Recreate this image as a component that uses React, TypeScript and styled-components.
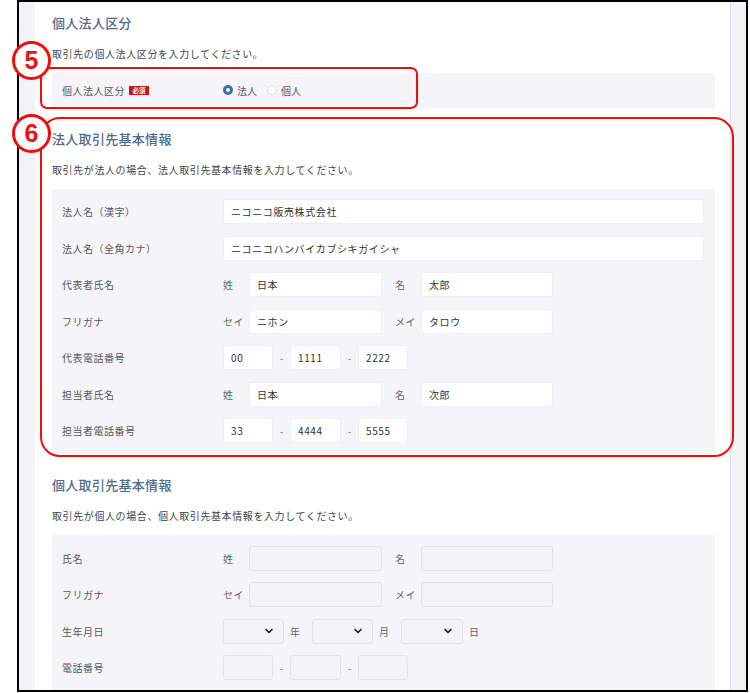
import React from 'react';
import styled, { createGlobalStyle } from 'styled-components';
import { ChevronDown } from 'lucide-react';

const GlobalStyle = createGlobalStyle`
    html, body {
        margin: 0;
        padding: 0;
        background: #ffffff;
    }
    * {
        box-sizing: border-box;
    }
`;

const FONT = `"Noto Sans CJK JP", "Noto Sans", sans-serif`;

const Stage = styled.div`
    position: relative;
    width: 750px;
    height: 693px;
    overflow: hidden;
    font-family: ${FONT};
`;

const Frame = styled.div`
    margin-left: 17px;
    width: 731px;
    height: 692px;
    border: 2px solid #000;
    display: flex;
    overflow: hidden;
`;

const Gutter = styled.div`
    width: 16px;
    flex-shrink: 0;
    background: #f3f3f7;
`;

const Track = styled.div`
    width: 16px;
    flex-shrink: 0;
    background: #f3f3f8;
    border-left: 1px solid #e2e2ea;
`;

const Panel = styled.div`
    flex: 1;
    background: #fff;
    padding: 10.5px 15px 0 17px;
`;

const Section = styled.section`
    & + & {
        margin-top: 21px;
    }
`;

const Title = styled.h2`
    margin: 0 0 13px;
    font-size: 13px;
    line-height: 20px;
    font-weight: 500;
    letter-spacing: 0.3px;
    color: #53698a;
`;

const Desc = styled.p`
    margin: 0 0 11px;
    font-size: 10px;
    line-height: 16px;
    letter-spacing: 0.6px;
    color: #444;
`;

const FormBox = styled.div<{ $compact?: boolean }>`
    background: #f5f5f9;
    padding: ${(p) => (p.$compact ? '0 11px 0 10px' : '5px 11px 5px 10px')};
`;

const Row = styled.div<{ $h?: number }>`
    display: flex;
    align-items: center;
    height: ${(p) => p.$h ?? 36.5}px;
`;

const Label = styled.div`
    width: 161px;
    flex-shrink: 0;
    display: flex;
    align-items: center;
    font-size: 10px;
    letter-spacing: 0.5px;
    color: #555;
`;

const Required = styled.span`
    margin-left: 4px;
    width: 20px;
    height: 9px;
    background: #c3161d;
    color: #fff;
    font-size: 6.5px;
    font-weight: 700;
    line-height: 9px;
    text-align: center;
    letter-spacing: 0;
`;

const Controls = styled.div`
    display: flex;
    align-items: center;
`;

const TextInput = styled.input<{ $w: number }>`
    width: ${(p) => p.$w}px;
    height: 25px;
    padding: 0 7px;
    border: 1px solid #efeff2;
    border-radius: 3px;
    background: #fff;
    font-family: ${FONT};
    font-size: 10px;
    letter-spacing: 0.6px;
    color: #333;
    outline: none;

    &:disabled {
        background: #f4f4f6;
        border-color: #e3e3e7;
    }
`;

const Prefix = styled.span<{ $gap?: number }>`
    width: 26px;
    margin-left: ${(p) => p.$gap ?? 0}px;
    flex-shrink: 0;
    font-size: 10px;
    letter-spacing: 0.5px;
    color: #666;
`;

const Dash = styled.span`
    width: 17px;
    text-align: center;
    font-size: 10px;
    color: #777;
`;

const SelectBox = styled.div<{ $w: number }>`
    width: ${(p) => p.$w}px;
    height: 25px;
    padding-right: 8px;
    display: flex;
    align-items: center;
    justify-content: flex-end;
    background: #f4f4f6;
    border: 1px solid #e3e3e7;
    border-radius: 3px;
    color: #222;
`;

const Unit = styled.span<{ $w?: number }>`
    width: ${(p) => p.$w ?? 28}px;
    padding-left: 6px;
    font-size: 10px;
    color: #666;
`;

const RadioItem = styled.label`
    display: flex;
    align-items: center;
    gap: 4px;
    margin-right: 10px;
    font-size: 10px;
    color: #556;
`;

const RadioDot = styled.span<{ $on?: boolean }>`
    width: 10px;
    height: 10px;
    border-radius: 50%;
    background: #fff;
    border: ${(p) => (p.$on ? '3px solid #3d6ea6' : '1px solid #dcdce2')};
`;

const AnnotBox = styled.div<{ $r: number }>`
    position: absolute;
    border: 2px solid #f20d0d;
    border-radius: ${(p) => p.$r}px;
    pointer-events: none;
`;

const Badge = styled.div`
    position: absolute;
    width: 39px;
    height: 39px;
    border-radius: 50%;
    border: 3.5px solid #f20d0d;
    background: #fff;
    display: flex;
    align-items: center;
    justify-content: center;
    font-family: "Liberation Sans", Arial, sans-serif;
    font-weight: 700;
    font-size: 25px;
    color: #f01010;
`;

type NameProps = { first: string; last: string; a: string; b: string; disabled?: boolean };

const NameFields = ({ first, last, a, b, disabled }: NameProps) => (
    <Controls>
        <Prefix>{first}</Prefix>
        <TextInput $w={133} readOnly value={a} disabled={disabled} />
        <Prefix $gap={13}>{last}</Prefix>
        <TextInput $w={132} readOnly value={b} disabled={disabled} />
    </Controls>
);

const PhoneFields = ({ parts, disabled }: { parts: string[]; disabled?: boolean }) => (
    <Controls>
        <TextInput $w={50} readOnly value={parts[0]} disabled={disabled} />
        <Dash>-</Dash>
        <TextInput $w={51} readOnly value={parts[1]} disabled={disabled} />
        <Dash>-</Dash>
        <TextInput $w={50} readOnly value={parts[2]} disabled={disabled} />
    </Controls>
);

const Chevron = () => <ChevronDown size={12} strokeWidth={3.5} />;

export default function App() {
    return (
        <Stage>
            <GlobalStyle />
            <Frame>
                <Gutter />
                <Panel>
                    <Section>
                        <Title>個人法人区分</Title>
                        <Desc>取引先の個人法人区分を入力してください。</Desc>
                        <FormBox $compact>
                            <Row $h={35}>
                                <Label>
                                    個人法人区分
                                    <Required>必須</Required>
                                </Label>
                                <Controls>
                                    <RadioItem>
                                        <RadioDot $on />
                                        法人
                                    </RadioItem>
                                    <RadioItem>
                                        <RadioDot />
                                        個人
                                    </RadioItem>
                                </Controls>
                            </Row>
                        </FormBox>
                    </Section>

                    <Section>
                        <Title>法人取引先基本情報</Title>
                        <Desc>取引先が法人の場合、法人取引先基本情報を入力してください。</Desc>
                        <FormBox>
                            <Row>
                                <Label>法人名（漢字）</Label>
                                <TextInput $w={481} readOnly value="ニコニコ販売株式会社" />
                            </Row>
                            <Row>
                                <Label>法人名（全角カナ）</Label>
                                <TextInput $w={481} readOnly value="ニコニコハンバイカブシキガイシャ" />
                            </Row>
                            <Row>
                                <Label>代表者氏名</Label>
                                <NameFields first="姓" last="名" a="日本" b="太郎" />
                            </Row>
                            <Row>
                                <Label>フリガナ</Label>
                                <NameFields first="セイ" last="メイ" a="ニホン" b="タロウ" />
                            </Row>
                            <Row>
                                <Label>代表電話番号</Label>
                                <PhoneFields parts={['00', '1111', '2222']} />
                            </Row>
                            <Row>
                                <Label>担当者氏名</Label>
                                <NameFields first="姓" last="名" a="日本" b="次郎" />
                            </Row>
                            <Row>
                                <Label>担当者電話番号</Label>
                                <PhoneFields parts={['33', '4444', '5555']} />
                            </Row>
                        </FormBox>
                    </Section>

                    <Section>
                        <Title>個人取引先基本情報</Title>
                        <Desc>取引先が個人の場合、個人取引先基本情報を入力してください。</Desc>
                        <FormBox>
                            <Row>
                                <Label>氏名</Label>
                                <NameFields first="姓" last="名" a="" b="" disabled />
                            </Row>
                            <Row>
                                <Label>フリガナ</Label>
                                <NameFields first="セイ" last="メイ" a="" b="" disabled />
                            </Row>
                            <Row>
                                <Label>生年月日</Label>
                                <Controls>
                                    <SelectBox $w={61}>
                                        <Chevron />
                                    </SelectBox>
                                    <Unit>年</Unit>
                                    <SelectBox $w={61}>
                                        <Chevron />
                                    </SelectBox>
                                    <Unit>月</Unit>
                                    <SelectBox $w={62}>
                                        <Chevron />
                                    </SelectBox>
                                    <Unit $w={20}>日</Unit>
                                </Controls>
                            </Row>
                            <Row>
                                <Label>電話番号</Label>
                                <PhoneFields parts={['', '', '']} disabled />
                            </Row>
                        </FormBox>
                    </Section>
                </Panel>
                <Track />
            </Frame>

            {/* callout annotations drawn over the form */}
            <AnnotBox $r={7} style={{ left: 40, top: 67, width: 378, height: 42 }} />
            <AnnotBox $r={20} style={{ left: 40, top: 117, width: 694, height: 340 }} />
            <Badge style={{ left: 12, top: 41 }}>5</Badge>
            <Badge style={{ left: 12, top: 114 }}>6</Badge>
        </Stage>
    );
}
